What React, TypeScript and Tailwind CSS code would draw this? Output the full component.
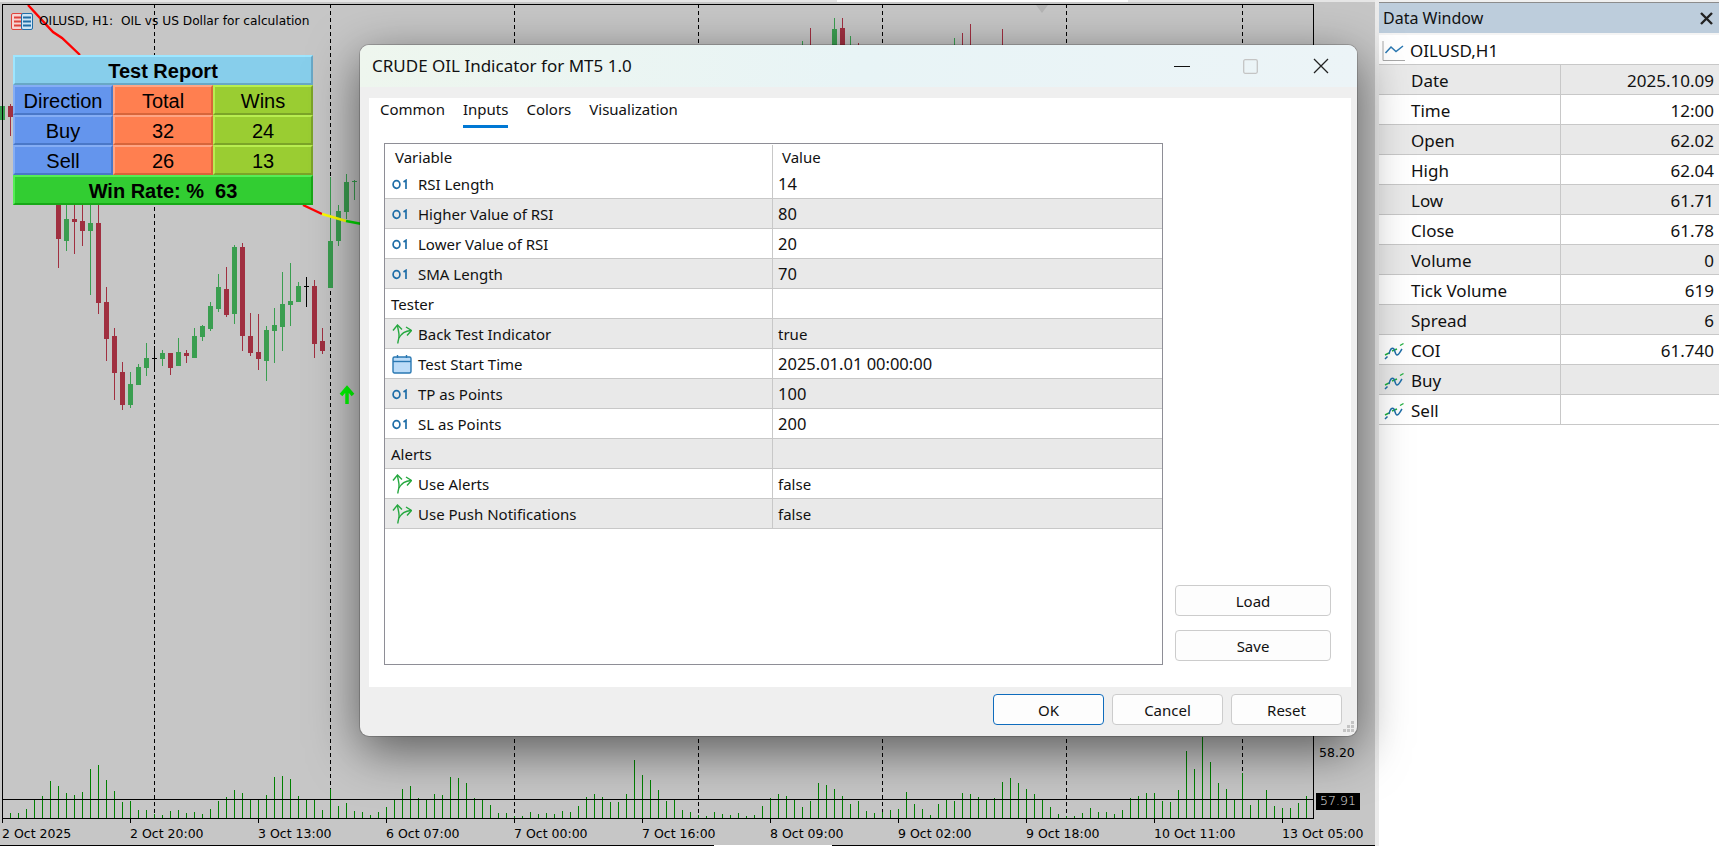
import React from 'react'

const uiFont = "font-['Noto_Sans',sans-serif]"

// [x, wickTop, bodyTop, bodyBottom, wickBottom, kind] in page pixels
type Candle = [number, number, number, number, number, 'g' | 'r' | 'd']

const candles: Candle[] = [
  [2, 104, 106, 120, 124, 'g'], [10, 104, 106, 117, 136, 'r'],
  [58, 205, 205, 239, 268, 'r'], [66, 205, 219, 241, 251, 'g'], [74, 205, 219, 222, 254, 'r'],
  [82, 205, 221, 231, 246, 'r'], [90, 205, 223, 231, 295, 'g'], [98, 205, 223, 303, 314, 'r'],
  [106, 287, 302, 339, 361, 'r'], [114, 328, 336, 373, 400, 'r'], [122, 362, 372, 405, 410, 'r'],
  [130, 372, 384, 405, 408, 'g'], [138, 364, 367, 385, 385, 'g'], [146, 343, 358, 368, 376, 'g'],
  [154, 346, 358, 358, 370, 'd'], [162, 350, 353, 359, 366, 'g'], [170, 353, 353, 368, 375, 'r'],
  [178, 338, 352, 366, 366, 'g'], [186, 350, 353, 356, 363, 'r'], [194, 328, 336, 358, 358, 'g'],
  [202, 325, 326, 337, 341, 'g'], [210, 302, 306, 329, 331, 'g'], [218, 274, 287, 309, 312, 'g'],
  [226, 267, 289, 315, 317, 'r'], [234, 245, 247, 314, 324, 'g'], [242, 243, 247, 336, 351, 'r'],
  [250, 313, 336, 353, 356, 'r'], [258, 314, 352, 359, 370, 'r'], [266, 326, 330, 361, 381, 'g'],
  [274, 308, 325, 331, 363, 'g'], [282, 272, 304, 327, 351, 'g'], [290, 263, 301, 305, 326, 'g'],
  [298, 282, 286, 302, 302, 'g'], [306, 277, 286, 286, 307, 'd'], [314, 280, 286, 344, 358, 'r'],
  [322, 328, 341, 351, 354, 'r'], [330, 177, 241, 288, 288, 'g'], [338, 205, 211, 241, 246, 'g'],
  [346, 174, 182, 212, 219, 'g'], [354, 180, 181, 182, 200, 'g'],
  [802, 41, 50, 50, 50, 'g'], [810, 28, 50, 50, 50, 'r'], [834, 18, 29, 50, 50, 'g'],
  [842, 18, 28, 50, 50, 'r'], [850, 36, 50, 50, 50, 'g'], [858, 43, 50, 50, 50, 'r'],
  [954, 38, 50, 50, 50, 'g'], [962, 33, 50, 50, 50, 'r'], [970, 24, 50, 50, 50, 'r'],
  [1002, 29, 50, 50, 50, 'r'],
]

const candleColor = { g: '#3a9e50', r: '#a02f40', d: '#000000' }

const volumes = [
  5, 5, 9, 19, 22, 37, 32, 25, 23, 26, 49, 53, 38, 27, 16, 17, 8, 8, 4, 3, 7, 8, 5, 6, 4, 9, 17, 21, 28, 25, 19, 19,
  23, 41, 42, 39, 22, 19, 18, 8, 29, 12, 15, 7, 6, 3, 6, 11, 19, 29, 32, 20, 19, 24, 23, 41, 40, 35, 20, 19, 13, 5,
  5, 2, 2, 6, 4, 5, 4, 7, 6, 12, 21, 24, 21, 16, 16, 24, 58, 43, 38, 28, 17, 18, 8, 6, 3, 2, 6, 4, 3, 5, 2, 3, 12,
  20, 24, 22, 18, 11, 17, 35, 33, 29, 22, 14, 17, 7, 5, 6, 8, 9, 26, 14, 9, 3, 14, 18, 17, 25, 24, 21, 19, 20, 36,
  40, 35, 29, 24, 19, 11, 4, 2, 2, 5, 10, 6, 6, 4, 8, 20, 22, 25, 25, 17, 16, 28, 67, 49, 81, 56, 35, 29, 19, 45,
  13, 19, 28, 12, 10, 10, 15, 22,
]

const gridLines = [154, 330, 514, 698, 882, 1066, 1242]
const timeLabels = [
  '2 Oct 2025', '2 Oct 20:00', '3 Oct 13:00', '6 Oct 07:00', '7 Oct 00:00', '7 Oct 16:00',
  '8 Oct 09:00', '9 Oct 02:00', '9 Oct 18:00', '10 Oct 11:00', '13 Oct 05:00',
]

type InputRow = { name: string; value: string; icon?: 'num' | 'bool' | 'date' }
const inputRows: InputRow[] = [
  { name: 'RSI Length', value: '14', icon: 'num' },
  { name: 'Higher Value of RSI', value: '80', icon: 'num' },
  { name: 'Lower Value of RSI', value: '20', icon: 'num' },
  { name: 'SMA Length', value: '70', icon: 'num' },
  { name: 'Tester', value: '' },
  { name: 'Back Test Indicator', value: 'true', icon: 'bool' },
  { name: 'Test Start Time', value: '2025.01.01 00:00:00', icon: 'date' },
  { name: 'TP as Points', value: '100', icon: 'num' },
  { name: 'SL as Points', value: '200', icon: 'num' },
  { name: 'Alerts', value: '' },
  { name: 'Use Alerts', value: 'false', icon: 'bool' },
  { name: 'Use Push Notifications', value: 'false', icon: 'bool' },
]

const dataRows: [string, string, boolean?][] = [
  ['Date', '2025.10.09'], ['Time', '12:00'], ['Open', '62.02'], ['High', '62.04'], ['Low', '61.71'], ['Close', '61.78'],
  ['Volume', '0'], ['Tick Volume', '619'], ['Spread', '6'], ['COI', '61.740', true], ['Buy', '', true], ['Sell', '', true],
]

function NumIcon() {
  return (
    <svg width="17" height="11" viewBox="0 0 17 11" fill="none" stroke="#1f6ea8">
      <ellipse cx="4.5" cy="5.5" rx="3.4" ry="3.8" strokeWidth="1.7" />
      <path d="M11.5 3 L14 1.3 V10" strokeWidth="1.7" />
    </svg>
  )
}

function BoolIcon() {
  return (
    <svg width="20" height="20" viewBox="0 0 20 20" fill="none" stroke="#25a83f" strokeWidth="1.4">
      <path d="M5.5 1.5 C6 6 7.5 9 7 13 C6.7 15 6 17 5.8 19.5" />
      <path d="M1 6.5 L5.5 1 L10 5.5" />
      <path d="M7 14 C9 10 13 7 19 6.5" />
      <path d="M14 3 L19.5 6.5 L15 11.5" />
    </svg>
  )
}

function CalendarIcon() {
  return (
    <svg width="20" height="20" viewBox="0 0 20 20">
      <rect x="1" y="3" width="18" height="16" rx="1.5" fill="#bcdcf8" stroke="#2a78b2" strokeWidth="1.4" />
      <path d="M1 7.5 H19" stroke="#2a78b2" strokeWidth="1.4" />
      <path d="M5.5 1 V4 M14.5 1 V4" stroke="#2a78b2" strokeWidth="1.4" />
    </svg>
  )
}

function WaveIcon() {
  return (
    <svg width="20" height="18" viewBox="0 0 20 18" fill="none">
      <path d="M1 13 L5 11 M8 9 L13 7 M16 3.5 L19.5 1.5" stroke="#22b040" strokeWidth="1.4" />
      <path d="M1 17 L3.5 14.5 M5 12 C6 7 8 5 10 7 C11 9 11.5 13 13 13 C15 13 16.5 9 18 7" stroke="#1f6ea8" strokeWidth="1.5" />
    </svg>
  )
}

function LineIcon() {
  return (
    <svg width="23" height="20" viewBox="0 0 23 20" fill="none">
      <path d="M1 0 V19.5 H23" stroke="#a8a8a8" strokeWidth="1" />
      <path d="M3.5 12 L9 6 L14 10.5 L21 5" stroke="#2a78b2" strokeWidth="1.5" />
    </svg>
  )
}

function ReportCell({ children, tone, bold, wide }: { children: React.ReactNode; tone: string; bold?: boolean; wide?: boolean }) {
  return (
    <div
      className={`flex h-[30px] items-center justify-center border-2 pt-px text-black ${tone} ${wide ? 'w-[300px]' : 'w-[100px]'} ${bold ? 'font-bold' : ''}`}
    >
      {children}
    </div>
  )
}

const blue = 'bg-[#6495ed] border-t-[#85aef5] border-l-[#85aef5] border-r-[#4a78c8] border-b-[#4a78c8]'
const coral = 'bg-[#ff7f50] border-t-[#ffa585] border-l-[#ffa585] border-r-[#d8653a] border-b-[#d8653a]'
const olive = 'bg-[#9acd32] border-t-[#b8ee50] border-l-[#b8ee50] border-r-[#7ba428] border-b-[#7ba428]'

function TestReport() {
  const rows = [
    ['Direction', 'Total', 'Wins'],
    ['Buy', '32', '24'],
    ['Sell', '26', '13'],
  ]
  return (
    <div className="absolute left-[13px] top-[55px] w-[300px] font-['Liberation_Sans',sans-serif] text-[20px] leading-none">
      <ReportCell wide bold tone="bg-[#87ceeb] border-t-[#9ee6ff] border-l-[#9ee6ff] border-r-[#69a8c6] border-b-[#69a8c6]">
        Test Report
      </ReportCell>
      {rows.map(row => (
        <div key={row[0]} className="flex">
          <ReportCell tone={blue}>{row[0]}</ReportCell>
          <ReportCell tone={coral}>{row[1]}</ReportCell>
          <ReportCell tone={olive}>{row[2]}</ReportCell>
        </div>
      ))}
      <ReportCell wide bold tone="bg-[#32cd32] border-t-[#55ee55] border-l-[#55ee55] border-r-[#18a818] border-b-[#18a818]">
        <span className="whitespace-pre">Win Rate: %  63</span>
      </ReportCell>
    </div>
  )
}

function PlotArea() {
  return (
    <svg width="1314" height="819" viewBox="0 4 1314 819" className="block shrink-0">
      {gridLines.map(x => (
        <path key={x} d={`M${x + 0.5} 4 V818`} stroke="#000" strokeDasharray="4 3" />
      ))}
      <path d="M1036 5 H1048 L1042 13 Z" fill="#b4b4b4" />
      {candles.map(([x, wt, bt, bb, wb, kind]) => (
        <g key={x} fill={candleColor[kind]}>
          <rect x={x} y={wt} width="1" height={wb - wt} />
          {kind === 'd' ? (
            <rect x={x - 2} y={bt} width="5" height="1" />
          ) : (
            <rect x={x - 2} y={bt} width="5" height={bb - bt} />
          )}
        </g>
      ))}
      <path d="M28 5 L53 32 L62 38 L80 55" fill="none" stroke="#ff0000" strokeWidth="2.4" />
      <path d="M303 205 L322 214" fill="none" stroke="#ff0000" strokeWidth="2.4" />
      <path d="M322 214 L346 221" fill="none" stroke="#ffff00" strokeWidth="2.4" />
      <path d="M346 221 L362 224" fill="none" stroke="#00e000" strokeWidth="2.4" />
      <path d="M347 404 V390 M341 395 L347 388 L353 395" fill="none" stroke="#00ff00" strokeWidth="3.5" />
      {volumes.map((h, i) => (
        <rect key={i} x={10 + i * 8} y={818 - h} width="1" height={h} fill="#008000" />
      ))}
      <path d="M2 799.5 H1313" stroke="#000" />
      <path d="M2.5 4 V819 M1313.5 4 V819 M2 4.5 H1314 M2 818.5 H1314" stroke="#000" />
      {timeLabels.map((_, i) => (
        <path key={i} d={`M${2.5 + i * 128} 818 V823`} stroke="#000" />
      ))}
      <path d="M1314 750.5 H1318" stroke="#000" />
    </svg>
  )
}

function ChartWindow() {
  return (
    <section className="relative flex h-full w-[1375px] shrink-0 flex-col bg-[#c6c6c6] font-['DejaVu_Sans',sans-serif] text-black">
      <div className="flex h-[2px] w-full bg-[#e6e6e6]">
        <div className="ml-[837px] w-[291px] bg-white" />
      </div>
      <div className="h-[2px] w-full" />
      <div className="flex">
        <PlotArea />
        <div className="flex flex-col pt-[740px] text-[12.5px]">
          <div className="flex h-[18px] items-center pl-[5px]">58.20</div>
          <div className="ml-[2px] mt-[31px] flex h-[17px] w-[44px] items-center justify-center bg-black font-light text-[#e8e8e8]">57.91</div>
        </div>
      </div>
      <div className="flex h-[22px] items-center pl-[2px] text-[12.5px]">
        {timeLabels.map(label => (
          <div key={label} className="w-32 shrink-0 whitespace-nowrap">{label}</div>
        ))}
      </div>
      <div className="flex h-px">
        <div className="w-[714px] bg-black" />
        <div className="w-[118px] bg-white" />
        <div className="flex-1 bg-black" />
      </div>

      <div className="absolute left-[11px] top-[12px] flex items-center gap-[6px] text-[12.2px]">
        <svg width="22" height="17" viewBox="0 0 22 17">
          <rect x="0.5" y="0.5" width="11" height="16" rx="1.5" fill="#f6d5d3" stroke="#e0433a" />
          <rect x="10.5" y="0.5" width="11" height="16" rx="1.5" fill="#d0e4f4" stroke="#1f6ea8" />
          <path d="M3 4.5 H10 M3 8.5 H10 M3 12.5 H10" stroke="#e0433a" strokeWidth="2" />
          <path d="M12 4.5 H20 M12 8.5 H20 M12 12.5 H20" stroke="#1f6ea8" strokeWidth="2" />
        </svg>
        <span className="whitespace-pre">OILUSD, H1:  OIL vs US Dollar for calculation</span>
      </div>
      <TestReport />
    </section>
  )
}

function DataWindow() {
  return (
    <aside className={`flex w-[340px] shrink-0 flex-col text-[17px] text-[#111] ${uiFont}`}>
      <div className="h-[2px] bg-[#f0f0f0]" />
      <div className="h-px bg-[#8c8c8c]" />
      <div className="flex h-[30px] items-center justify-between bg-[#bdcddc] pl-[4px] pr-[6px] text-[16px]">
        <span>Data Window</span>
        <svg width="13" height="13" viewBox="0 0 13 13" stroke="#222" strokeWidth="2.4">
          <path d="M1 1 L12 12 M12 1 L1 12" />
        </svg>
      </div>
      <div className="h-[2px] bg-[#f4f4f4]" />
      <div className="flex h-[30px] items-center border-b border-[#c8c8c8] bg-white pl-[3px] pt-[2px]">
        <span className="w-[28px]"><LineIcon /></span>
        <span>OILUSD,H1</span>
      </div>
      {dataRows.map(([name, value, wave], i) => (
        <div key={name} className={`flex h-[30px] items-stretch border-b border-[#c8c8c8] ${i % 2 === 0 ? 'bg-[#e9e9e9]' : 'bg-white'}`}>
          <div className="flex w-[182px] items-center border-r border-[#c8c8c8] pt-[2px]">
            <span className="flex w-[32px] justify-center pr-[2px]">{wave && <WaveIcon />}</span>
            <span>{name}</span>
          </div>
          <div className="flex flex-1 items-center justify-end pr-[5px] pt-[2px]">{value}</div>
        </div>
      ))}
    </aside>
  )
}

function DialogButton({ label, primary, wide }: { label: string; primary?: boolean; wide?: boolean }) {
  return (
    <button
      className={`flex h-[31px] items-center justify-center rounded-[4px] border bg-[#fdfdfd] pt-px ${wide ? 'w-[156px]' : 'w-[111px]'} ${primary ? 'border-[#0f6cbd]' : 'border-[#cccccc]'}`}
    >
      {label}
    </button>
  )
}

function RowIcon({ kind }: { kind: InputRow['icon'] }) {
  if (kind === 'num') return <NumIcon />
  if (kind === 'bool') return <BoolIcon />
  return <CalendarIcon />
}

function SettingsDialog() {
  return (
    <div
      className={`absolute left-[360px] top-[45px] flex h-[691px] w-[997px] flex-col overflow-hidden rounded-[9px] bg-[#efefef] text-[15px] text-[#111] shadow-[0_14px_50px_rgba(0,0,0,0.55),0_0_0_1px_rgba(0,0,0,0.18)] ${uiFont}`}
    >
      <div className="flex h-[42px] shrink-0 items-center justify-between bg-gradient-to-r from-[#eef6ee] via-[#e8f4f6] to-[#ecf4f7] pl-[12px]">
        <span className="text-[17px]">CRUDE OIL Indicator for MT5 1.0</span>
        <div className="flex items-center">
          <svg width="16" height="15" viewBox="0 0 16 15" stroke="#111"><path d="M0 7.5 H16" /></svg>
          <svg width="15" height="15" viewBox="0 0 15 15" fill="none" stroke="#c4c4c4" strokeWidth="1.3" className="ml-[53px]">
            <rect x="0.7" y="0.7" width="13.6" height="13.6" rx="1.5" />
          </svg>
          <svg width="16" height="16" viewBox="0 0 16 16" stroke="#222" strokeWidth="1.3" className="ml-[55px] mr-[28px]">
            <path d="M1 1 L15 15 M15 1 L1 15" />
          </svg>
        </div>
      </div>
      <div className="ml-[9px] mr-[6px] mt-[11px] flex h-[589px] shrink-0 flex-col bg-white">
        <div className="flex h-[30px] shrink-0 gap-[18px] pl-[11px]">
          {['Common', 'Inputs', 'Colors', 'Visualization'].map(tab => (
            <div key={tab} className={`flex items-center ${tab === 'Inputs' ? 'border-b-[3px] border-[#0078d4] pb-[4px]' : 'pb-[7px]'}`}>{tab}</div>
          ))}
        </div>
        <div className="flex pl-[15px] pt-[15px]">
          <div className="h-[522px] w-[779px] shrink-0 border border-[#8e8e96]">
            <div className="flex h-[25px] pt-px">
              <div className="flex w-[388px] items-center border-r border-[#c8c8c8] pl-[10px]">Variable</div>
              <div className="flex items-center pl-[9px]">Value</div>
            </div>
            {inputRows.map((row, i) => (
              <div key={row.name} className={`flex h-[30px] border-b border-[#c8c8c8] ${i % 2 === 1 ? 'bg-[#e9e9e9]' : 'bg-white'}`}>
                <div className={`flex w-[388px] items-center border-r border-[#c8c8c8] pt-px ${row.icon ? 'pl-[7px]' : 'pl-[6px]'}`}>
                  {row.icon && <span className="flex w-[26px] items-center"><RowIcon kind={row.icon} /></span>}
                  <span>{row.name}</span>
                </div>
                <div className={`flex items-center pl-[5px] pt-px ${/\d/.test(row.value) ? 'text-[16.5px]' : ''}`}>{row.value}</div>
              </div>
            ))}
          </div>
          <div className="ml-[12px] flex flex-col justify-end gap-[14px] pb-[4px]">
            <DialogButton label="Load" wide />
            <DialogButton label="Save" wide />
          </div>
        </div>
      </div>
      <div className="relative flex flex-1 justify-end gap-[8px] pr-[15px] pt-[7px]">
        <DialogButton label="OK" primary />
        <DialogButton label="Cancel" />
        <DialogButton label="Reset" />
        <svg width="12" height="12" viewBox="0 0 12 12" fill="#c4c4c4" className="absolute bottom-[3px] right-[2px]">
          <path d="M8 0h3v3H8zM4 4h3v3H4zM8 4h3v3H8zM0 8h3v3H0zM4 8h3v3H4zM8 8h3v3H8z" />
        </svg>
      </div>
    </div>
  )
}

export default function App() {
  return (
    <div className="relative flex h-[846px] w-[1719px] overflow-hidden bg-white">
      <ChartWindow />
      <div className="w-[4px] shrink-0 bg-[#ebebeb]" />
      <DataWindow />
      <SettingsDialog />
    </div>
  )
}
